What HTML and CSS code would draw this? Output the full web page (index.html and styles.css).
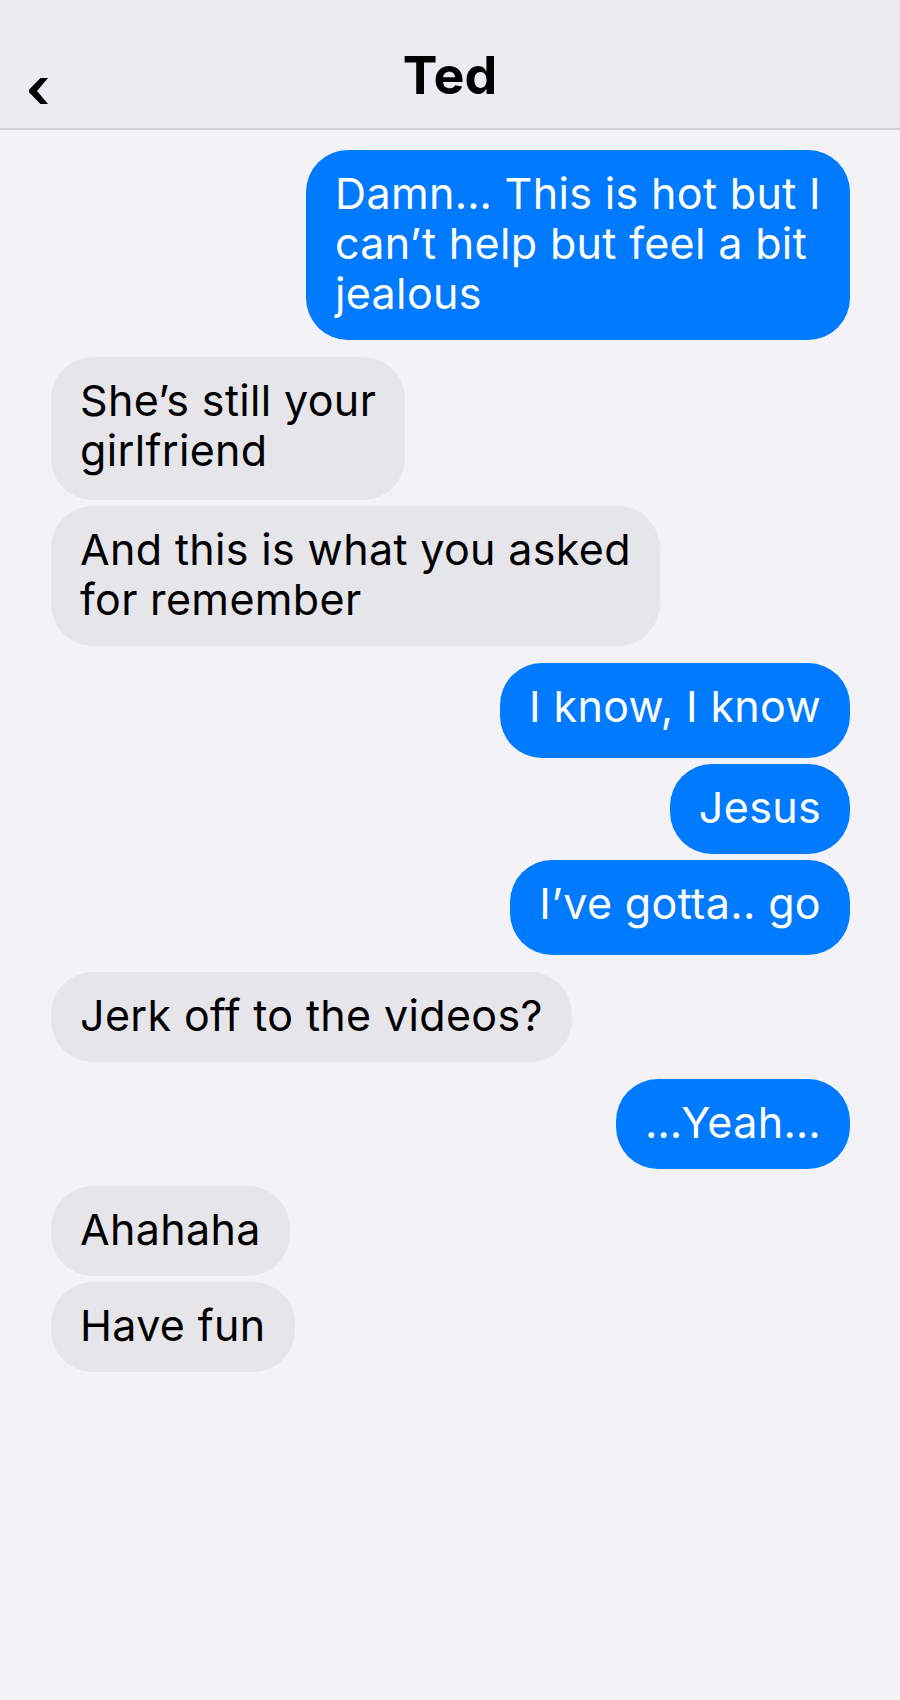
FILE: index.html
```html
<!DOCTYPE html>
<html lang="en">
<head>
<meta charset="utf-8">
<title>Ted</title>
<link rel="stylesheet" href="styles.css">
</head>
<body>
<div class="screen">
  <header class="nav">
    <a class="back" href="#" aria-label="Back">
      <svg width="22" height="30" viewBox="0 0 22 30" aria-hidden="true">
        <polygon points="13.5,2 21,2 10,15 21,28 13.5,28 2,16.2 2,13.8" fill="#000"/>
      </svg>
    </a>
    <h1 class="title">Ted</h1>
    <span class="spacer"></span>
  </header>
  <main class="thread">
    <div class="msg sent">Damn… This is hot but I<br>can’t help but feel a bit<br>jealous</div>
    <div class="msg recv group tall-two">She’s still your<br>girlfriend</div>
    <div class="msg recv">And this is what you asked<br>for remember</div>
    <div class="msg sent group tall">I know, I know</div>
    <div class="msg sent">Jesus</div>
    <div class="msg sent tall">I’ve gotta.. go</div>
    <div class="msg recv group">Jerk off to the videos?</div>
    <div class="msg sent group">…Yeah…</div>
    <div class="msg recv group">Ahahaha</div>
    <div class="msg recv">Have fun</div>
  </main>
</div>
</body>
</html>
```
FILE: styles.css
```css
* { box-sizing: border-box; }
html, body {
  margin: 0;
  padding: 0;
  background: #f2f2f7;
}
body {
  font-family: Inter, "Noto Sans", "Liberation Sans", sans-serif;
  color: #000;
}
.screen {
  min-height: 1700px;
  background: #f2f2f7;
}
.nav {
  display: grid;
  grid-template-columns: 1fr auto 1fr;
  align-items: start;
  height: 130px;
  padding-top: 45px;
  background: #ebebf0;
  border-bottom: 2px solid #d1d1d6;
}
.back {
  display: block;
  width: 22px;
  height: 30px;
  margin-top: 31px;
  margin-left: 27px;
}
.back svg { display: block; }
.title {
  margin: 0;
  font-size: 52px;
  line-height: 61px;
  font-weight: 700;
  letter-spacing: 0;
}
.thread {
  display: flex;
  flex-direction: column;
  gap: 6px;
  padding: 20px 50px 20px 51px;
}
.msg {
  max-width: 640px;
  padding: 18px 29px 22px;
  border-radius: 42px;
  font-size: 43px;
  line-height: 50px;
  letter-spacing: 0.35px;
  white-space: nowrap;
}
.msg.group { margin-top: 11px; }
.msg.tall { padding-bottom: 27px; }
.msg.tall-two { padding-bottom: 25px; }
.sent {
  align-self: flex-end;
  background: #007aff;
  color: #fff;
}
.recv {
  align-self: flex-start;
  background: #e5e5ea;
  color: #000;
}
```
